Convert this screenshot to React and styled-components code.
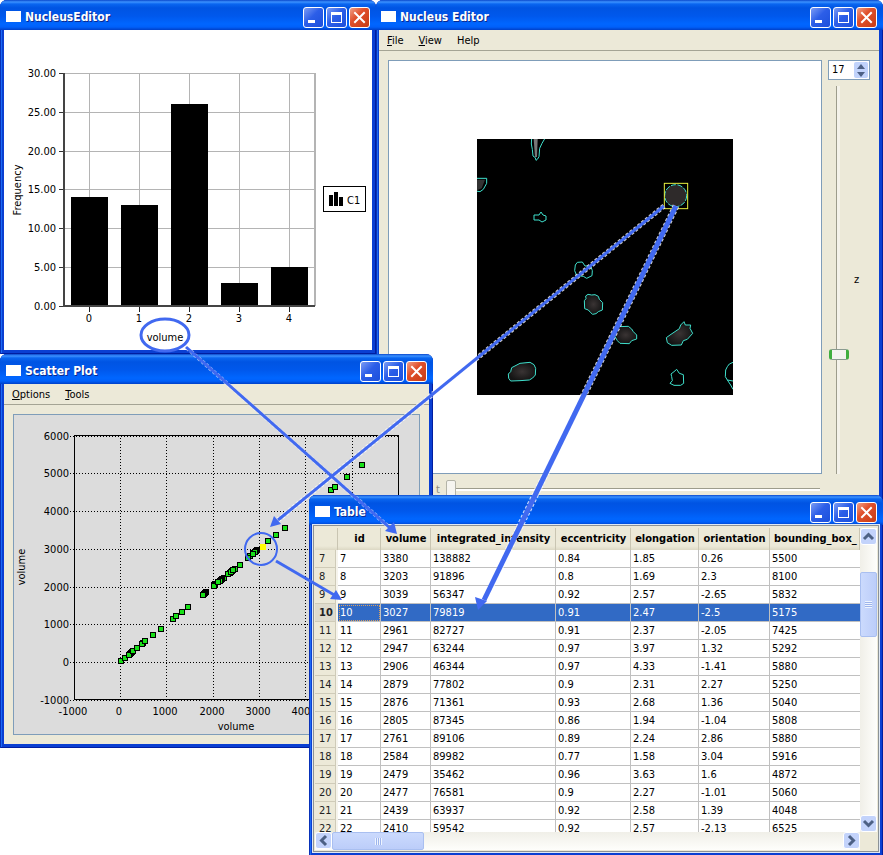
import React from "react";
import styled, { createGlobalStyle, css } from "styled-components";

const bars = [14, 13, 26, 3, 5];
const barTicks = [0, 5, 10, 15, 20, 25, 30];

const volumes = [
  30, 100, 230, 260, 240, 210, 190, 280, 360, 500, 480, 550, 710, 880, 1140, 1220,
  1330, 1460, 1850, 1830, 1810, 1790, 2060, 2040, 2020, 2200, 2240, 2210, 2180, 2150,
  2110, 2370, 2330, 2410, 2439, 2479, 2477, 2400, 2430, 2584, 2805, 2761, 2961, 2947,
  2879, 2906, 2876, 3203, 3380, 3560, 4550, 4640, 4900, 5220,
];

const columns = [
  { name: "id", width: 43 },
  { name: "volume", width: 50 },
  { name: "integrated_intensity", width: 125 },
  { name: "eccentricity", width: 75 },
  { name: "elongation", width: 68 },
  { name: "orientation", width: 71 },
  { name: "bounding_box_" },
];

const rows = [
  [7, 3380, 138882, 0.84, 1.85, 0.26, 5500],
  [8, 3203, 91896, 0.8, 1.69, 2.3, 8100],
  [9, 3039, 56347, 0.92, 2.57, -2.65, 5832],
  [10, 3027, 79819, 0.91, 2.47, -2.5, 5175],
  [11, 2961, 82727, 0.91, 2.37, -2.05, 7425],
  [12, 2947, 63244, 0.97, 3.97, 1.32, 5292],
  [13, 2906, 46344, 0.97, 4.33, -1.41, 5880],
  [14, 2879, 77802, 0.9, 2.31, 2.27, 5250],
  [15, 2876, 71361, 0.93, 2.68, 1.36, 5040],
  [16, 2805, 87345, 0.86, 1.94, -1.04, 5808],
  [17, 2761, 89106, 0.89, 2.24, 2.86, 5880],
  [18, 2584, 89982, 0.77, 1.58, 3.04, 5916],
  [19, 2479, 35462, 0.96, 3.63, 1.6, 4872],
  [20, 2477, 76581, 0.9, 2.27, -1.01, 5060],
  [21, 2439, 63937, 0.92, 2.58, 1.39, 4048],
  [22, 2410, 59542, 0.92, 2.57, -2.13, 6525],
];

// cell outlines, three units to a pixel of the slice
const nuclei = [
  "301,370 316,369 324,381 341,381 346,395 345,410 329,418 319,412 299,410 293,395 295,378",
  "333,466 344,468 354,467 364,472 367,481 377,491 376,513 364,518 357,524 347,526 341,521 334,513 323,509 322,485 327,479 326,471",
  "426,563 454,562 464,570 469,578 479,588 479,600 464,605 457,614 429,613 421,605 413,591 417,573",
  "579,588 607,569 611,558 621,548 625,558 641,558 639,568 647,583 631,601 619,605 613,618 584,619 571,611 568,596",
  "104,686 129,673 159,670 171,677 176,688 175,708 167,717 157,723 129,725 101,726 95,718 94,705 101,698",
  "591,698 599,691 607,703 619,707 620,733 611,739 591,739 579,733 586,725 584,713 582,705",
  "-4,118 29,118 29,133 19,151 9,158 -4,156",
  "164,-4 163,15 166,31 168,51 175,56 177,64 181,61 186,53 188,28 195,13 205,-4",
  "171,228 186,228 192,219 198,228 207,231 207,243 195,249 186,243 171,243",
];

const WindowButtons = () => (
  <Controls>
    <ControlButton aria-label="Minimize">
      <svg width="19" height="19">
        <rect x="4" y="12" width="7" height="3" fill="#fff" />
      </svg>
    </ControlButton>
    <ControlButton aria-label="Maximize">
      <svg width="19" height="19">
        <path d="M4 4h11v11H4z M5 7v7h9V7z" fill="#fff" fillRule="evenodd" />
      </svg>
    </ControlButton>
    <ControlButton $close aria-label="Close">
      <svg width="19" height="19">
        <path d="M5 5l9 9M14 5l-9 9" stroke="#fff" strokeWidth="2" strokeLinecap="square" />
      </svg>
    </ControlButton>
  </Controls>
);

const TitleBar = ({ title }) => (
  <TitleRow>
    <AppIcon />
    <Title>{title}</Title>
    <WindowButtons />
  </TitleRow>
);

const Histogram = () => {
  const y = (v) => 276 - Math.round(v * 7.77);
  const x = (i) => 85 + Math.round(i * 50.1);
  return (
    <Plot width="368" height="320" viewBox="0 0 368 320">
      {barTicks.map((t) => (
        <g key={t}>
          <path d={`M60 ${y(t) + 0.5}H311`} stroke="#b4b4b4" />
          <path d={`M55 ${y(t) + 0.5}h5`} stroke="#333" />
          <text x="52" y={y(t) + 4} textAnchor="end">
            {t.toFixed(2)}
          </text>
        </g>
      ))}
      {bars.map((v, i) => (
        <g key={i}>
          <path d={`M${x(i) + 0.5} 43V276`} stroke="#b4b4b4" />
          <rect x={x(i) - 18} y={y(v)} width="37" height={276 - y(v)} />
          <path d={`M${x(i) + 0.5} 277v5`} stroke="#222" />
          <text x={x(i)} y="292" textAnchor="middle">
            {i}
          </text>
        </g>
      ))}
      <path d="M311 43V276" stroke="#b4b4b4" strokeWidth="2" />
      <path d="M60 43V277M60 276H311" stroke="#444" strokeWidth="2" />
      <text x="161" y="311" textAnchor="middle">
        volume
      </text>
      <text transform="translate(17 160) rotate(-90)" textAnchor="middle">
        Frequency
      </text>
      <rect x="319.5" y="156.5" width="42" height="25" fill="#fff" stroke="#000" />
      <path d="M325 165h4v11h-4zM330 162h4v14h-4zM335 167h4v9h-4z" />
      <text x="343" y="174">
        C1
      </text>
    </Plot>
  );
};

const ScatterChart = () => {
  const x = (v) => 106 + Math.round(v * 0.0463);
  const y = (v) => 247 - Math.round(v * 0.0377);
  const ticks = [-1000, 0, 1000, 2000, 3000, 4000, 5000, 6000];
  return (
    <Plot $gray width="405" height="319" viewBox="0 0 405 319">
      {ticks.map((t) => (
        <g key={t}>
          {t > -1000 && t < 6000 && (
            <path d={`M${x(t) + 0.5} 20V286`} stroke="#000" strokeDasharray="1 2" />
          )}
          <path d={`M56 ${y(t) + 0.5}H384`} stroke="#000" strokeDasharray="1 2" />
          <text x="55" y={y(t) + 4} textAnchor="end">
            {t}
          </text>
          {t <= 4000 && (
            <text x={x(t) - 1} y="300" textAnchor="middle">
              {t}
            </text>
          )}
        </g>
      ))}
      <rect x="60.5" y="20.5" width="324" height="264" fill="none" stroke="#000" />
      {volumes.map((v, i) => (
        <rect
          key={i}
          x={x(v) - 2.5}
          y={y(v) - 2.5}
          width="5"
          height="5"
          fill="#18e018"
          stroke="#000"
        />
      ))}
      <rect x={x(3050) - 1} y={y(3050) - 3} width="6" height="6" fill="#ff0" />
      <text x="222" y="315" textAnchor="middle">
        volume
      </text>
      <text transform="translate(11 152) rotate(-90)" textAnchor="middle">
        volume
      </text>
    </Plot>
  );
};

const Slice = () => (
  <SliceImage width="256" height="256" viewBox="0 0 768 768">
    <defs>
      <radialGradient id="cell">
        <stop offset="0" stopColor="#3a3434" />
        <stop offset="1" stopColor="#141414" />
      </radialGradient>
    </defs>
    <path d="M170 0h12l-2 54h-6z" fill="#777" />
    <path d="M0 122h24l-10 26l-14 6z" fill="#333" />
    {nuclei.map((points, i) => (
      <polygon
        key={i}
        points={points}
        fill={i > 0 && i < 5 ? "url(#cell)" : "none"}
        stroke="#3fe0cc"
        strokeWidth="3"
      />
    ))}
    <path
      d="M768 670L757 675L751 683L746 693L745 713L751 723L768 726M751 723L761 738L768 751"
      fill="none"
      stroke="#3fe0cc"
      strokeWidth="3"
    />
    <circle cx="596" cy="170" r="33" fill="#2e2a2a" stroke="#3fe0cc" strokeWidth="3" strokeDasharray="16 4" />
    <rect x="562" y="133" width="70" height="76" fill="none" stroke="#e8f040" strokeWidth="3" />
  </SliceImage>
);

const Chevron = ({ d }) => (
  <svg width="15" height="15" viewBox="0 0 15 15">
    <path d={d} fill="none" stroke="#4d6185" strokeWidth="3" />
  </svg>
);

const DataTable = () => (
  <Grid>
    <colgroup>
      <Col $width={23} />
      {columns.map((c) => (
        <Col key={c.name} $width={c.width} />
      ))}
    </colgroup>
    <thead>
      <tr>
        <HeadCell aria-label="Row" />
        {columns.map((c) => (
          <HeadCell key={c.name} scope="col">
            {c.name}
          </HeadCell>
        ))}
      </tr>
    </thead>
    <tbody>
      {rows.map((row) => (
        <Row key={row[0]} $selected={row[0] === 10}>
          <RowHead scope="row" $selected={row[0] === 10}>
            {row[0]}
          </RowHead>
          {row.map((value, i) => (
            <Cell key={i}>{value}</Cell>
          ))}
        </Row>
      ))}
    </tbody>
  </Grid>
);

// arrows that tie the linked views together
const Links = () => (
  <LinkLayer width="883" height="855" viewBox="0 0 883 855">
    <g fill="none" stroke="#fff" strokeDasharray="3 2">
      <path d="M187 348L390 528" strokeWidth="4" strokeOpacity="0.6" />
      <path d="M664 206L278 520" strokeWidth="5" strokeOpacity="0.8" />
      <path d="M676 206L484 600" strokeWidth="7" strokeOpacity="0.8" />
    </g>
    <g fill="none" stroke="#4169f0">
      <ellipse cx="165" cy="335" rx="24" ry="16" strokeWidth="3" />
      <circle cx="261" cy="549" r="16" strokeWidth="2" />
      <path d="M186 347L390 528" strokeWidth="3" />
      <path d="M664 206L278 520" strokeWidth="3" />
      <path d="M676 206L484 600" strokeWidth="5" />
      <path d="M276 561L336 596" strokeWidth="3" />
    </g>
    <g fill="#4169f0">
      <path d="M397 534l-12 -3l9 -9z" />
      <path d="M270 527l4 -11l7 8z" />
      <path d="M478 610l-3 -13l12 4z" />
      <path d="M342 600l-12 -1l6 -9z" />
    </g>
  </LinkLayer>
);

const App = () => {
  return (
    <Desktop>
      <GlobalStyle />

      <EditorWindow>
        <TitleBar title="Nucleus Editor" />
        <MenuBar>
          <MenuItem>
            <u>F</u>ile
          </MenuItem>
          <MenuItem>
            <u>V</u>iew
          </MenuItem>
          <MenuItem>Help</MenuItem>
        </MenuBar>
        <EditorBody>
          <Canvas>
            <Slice />
          </Canvas>
          <SideColumn>
            <SpinBox>
              <SpinInput aria-label="z slice" defaultValue="17" />
              <SpinArrows>
                <SpinButton aria-label="Next slice">
                  <svg width="8" height="5">
                    <path d="M0 5L4 0L8 5z" fill="#4d6185" />
                  </svg>
                </SpinButton>
                <SpinButton aria-label="Previous slice">
                  <svg width="8" height="5">
                    <path d="M0 0L4 5L8 0z" fill="#4d6185" />
                  </svg>
                </SpinButton>
              </SpinArrows>
            </SpinBox>
            <DepthControl>
              <DepthSlider id="z" type="range" min="0" max="56" defaultValue="17" />
              <label htmlFor="z">z</label>
            </DepthControl>
          </SideColumn>
          <TimeControl>
            <label htmlFor="t">t</label>
            <TimeSlider id="t" type="range" min="0" max="10" defaultValue="0" />
          </TimeControl>
        </EditorBody>
      </EditorWindow>

      <HistogramWindow>
        <TitleBar title="NucleusEditor" />
        <Histogram />
      </HistogramWindow>

      <ScatterWindow>
        <TitleBar title="Scatter Plot" />
        <MenuBar>
          <MenuItem>
            <u>O</u>ptions
          </MenuItem>
          <MenuItem>
            <u>T</u>ools
          </MenuItem>
        </MenuBar>
        <ScatterBody>
          <ScatterFrame>
            <ScatterChart />
          </ScatterFrame>
        </ScatterBody>
      </ScatterWindow>

      <TableWindow>
        <TitleBar title="Table" />
        <TableFrame>
          <Viewport>
            <DataTable />
          </Viewport>
          <ScrollTrack $vertical>
            <ScrollButton aria-label="Scroll up">
              <Chevron d="M3 10L7.500 5.500L12 10" />
            </ScrollButton>
            <ScrollGap $size={27} />
            <ScrollThumb $vertical $size={65}>
              <Grip $vertical />
            </ScrollThumb>
            <ScrollGap />
            <ScrollButton aria-label="Scroll down">
              <Chevron d="M3 5L7.500 9.500L12 5" />
            </ScrollButton>
          </ScrollTrack>
          <ScrollTrack>
            <ScrollButton aria-label="Scroll left">
              <Chevron d="M10 3L5.500 7.500L10 12" />
            </ScrollButton>
            <ScrollThumb $size={92}>
              <Grip />
            </ScrollThumb>
            <ScrollGap />
            <ScrollButton aria-label="Scroll right">
              <Chevron d="M5 3L9.500 7.500L5 12" />
            </ScrollButton>
          </ScrollTrack>
        </TableFrame>
      </TableWindow>

      <Links />
    </Desktop>
  );
};

export default App;

const GlobalStyle = createGlobalStyle`
  * {
    box-sizing: border-box;
  }

  body {
    margin: 0;
    background: #fff;
    color: #000;
    font: 11px/14px "DejaVu Sans Condensed", "DejaVu Sans", sans-serif;
  }

  button, input {
    font: inherit;
    color: inherit;
  }
`;

const Desktop = styled.main`
  position: relative;
  min-height: max(100vh, 855px);
  overflow: hidden;
`;

const Window = styled.section`
  position: absolute;
  display: flex;
  flex-direction: column;
  overflow: hidden;
  border-radius: 7px 7px 0 0;
  padding: 0 4px 4px;
  background: #0a3fd2;
  box-shadow: inset 1px 0 #0831b8, inset -1px -1px #001ea0, inset 2px 0 #1c6af4;
`;

const HistogramWindow = styled(Window)`
  top: 0;
  left: 0;
  width: 376px;
`;

const EditorWindow = styled(Window)`
  top: 0;
  left: 376px;
  right: 0;
  padding-left: 3px;
`;

const ScatterWindow = styled(Window)`
  top: 354px;
  left: 0;
  width: 433px;
`;

const TableWindow = styled(Window)`
  top: 495px;
  left: 309px;
  right: 0;
`;

const TitleRow = styled.header`
  display: flex;
  align-items: center;
  height: 30px;
  margin: 0 -4px;
  padding: 4px 6px 0;
  background: linear-gradient(
    #0a48cc 0,
    #3c92ff 2px,
    #0a66f0 4px,
    #0054e3 8px,
    #0058ec 16px,
    #0066ff 24px,
    #0060fa 27px,
    #0040c8 30px
  );
`;

const AppIcon = styled.span`
  width: 15px;
  height: 11px;
  margin: 0 4px 2px 0;
  background: #fff;
`;

const Title = styled.h1`
  flex: 1;
  margin: 0;
  color: #fff;
  font-size: 12px;
  line-height: 16px;
  font-weight: 700;
  text-shadow: 1px 1px #0a2a90;
`;

const Controls = styled.div`
  display: flex;
  gap: 2px;
`;

const ControlButton = styled.button`
  width: 21px;
  height: 21px;
  padding: 0;
  border: 1px solid #fff;
  border-radius: 3px;
  background: ${({ $close }) =>
    $close
      ? "linear-gradient(135deg, #f0a088, #e0502c 40%, #c83c14)"
      : "linear-gradient(135deg, #7c9cf4, #2c5ee8 45%, #1c50dc)"};

  svg {
    display: block;
  }
`;

const MenuBar = styled.nav`
  display: flex;
  gap: 15px;
  height: 21px;
  padding: 1px 8px 0;
  background: #ece9d8;
  border-bottom: 1px solid #a5a495;
`;

const MenuItem = styled.button`
  padding: 0;
  border: 0;
  background: none;
`;

const Plot = styled.svg`
  display: block;
  background: ${({ $gray }) => ($gray ? "#dcdcdc" : "#fff")};
  font-size: 11px;
`;

const EditorBody = styled.div`
  display: grid;
  grid-template-columns: minmax(0, 1fr) 42px;
  grid-template-rows: 414px auto;
  gap: 6px;
  padding: 9px 9px 12px;
  background: #ece9d8;
`;

const Canvas = styled.div`
  display: flex;
  align-items: center;
  justify-content: center;
  border: 1px solid #7f9db9;
  background: #fff;
`;

const SliceImage = styled.svg`
  background: #000;
`;

const SideColumn = styled.div`
  display: flex;
  flex-direction: column;
  gap: 6px;
  min-height: 0;
`;

const SpinBox = styled.div`
  display: flex;
  height: 20px;
  padding: 1px;
  border: 1px solid #7f9db9;
  background: #fff;
`;

const SpinInput = styled.input`
  flex: 1;
  min-width: 0;
  padding: 0 2px;
  border: 0;
  outline: 0;
  background: none;
`;

const SpinArrows = styled.div`
  display: flex;
  flex-direction: column;
  width: 14px;
  border-radius: 2px;
  background: #c1d3fb;
`;

const SpinButton = styled.button`
  display: flex;
  flex: 1;
  align-items: center;
  justify-content: center;
  padding: 0;
  border: 0;
  background: none;
`;

const DepthControl = styled.div`
  display: flex;
  flex: 1;
  align-items: center;
  gap: 4px;
  min-height: 0;
`;

const slider = css`
  appearance: none;
  margin: 0;
`;

const DepthSlider = styled.input`
  ${slider}
  writing-mode: vertical-lr;
  direction: rtl;
  width: 22px;
  height: 100%;
  background: linear-gradient(90deg, transparent 8px, #9d9c8c 8px 9px, #f4f2ea 9px 12px, transparent 12px);

  &::-webkit-slider-thumb {
    appearance: none;
    width: 20px;
    height: 11px;
    border: 1px solid #778892;
    border-width: 1px 3px;
    border-color: #8a9a90 #3fae3f;
    border-radius: 3px;
    background: #f3f3ef;
  }
`;

const TimeControl = styled.div`
  display: flex;
  grid-column: 1 / -1;
  align-items: center;
  gap: 6px;
  padding: 0 50px 0 48px;
  color: #8a897c;
`;

const TimeSlider = styled.input`
  ${slider}
  flex: 1;
  min-width: 0;
  height: 20px;
  background: linear-gradient(transparent 8px, #9d9c8c 8px 9px, #fff 9px 11px, transparent 11px);

  &::-webkit-slider-thumb {
    appearance: none;
    width: 10px;
    height: 20px;
    border: 1px solid #b4b4a8;
    border-radius: 2px;
    background: #f6f5f0;
  }
`;

const ScatterBody = styled.div`
  padding: 9px;
  background: #ece9d8;
`;

const ScatterFrame = styled.div`
  border: 1px solid #7f9db9;
  background: #dcdcdc;
`;

const TableFrame = styled.div`
  display: grid;
  grid-template-columns: minmax(0, 1fr) 17px;
  grid-template-rows: 304px 18px;
  padding: 2px 1px 1px;
  border: 1px solid #8c9296;
  outline: 1px solid #dfe8f4;
  background: #ece9d8;
`;

const Viewport = styled.div`
  overflow: hidden;
  background: #fff;
`;

const Grid = styled.table`
  width: 100%;
  table-layout: fixed;
  border-collapse: separate;
  border-spacing: 0;
`;

const Col = styled.col`
  width: ${({ $width }) => ($width ? `${$width}px` : "auto")};
`;

const HeadCell = styled.th`
  height: 22px;
  padding: 0;
  overflow: hidden;
  background: linear-gradient(#ece9d8 18px, #dcd8c4 22px);
  box-shadow: inset -1px 0 #c9c5b2;
  font-weight: 700;
  line-height: 18px;
  text-align: center;
  white-space: nowrap;

  &:last-child {
    padding-left: 4px;
    text-align: left;
  }
`;

const Cell = styled.td`
  height: 18px;
  padding: 0 2px;
  border-right: 1px solid #c0c0c0;
  border-bottom: 1px solid #c0c0c0;
  line-height: 17px;

  &:last-child {
    border-right: 0;
  }
`;

const RowHead = styled.th`
  height: 18px;
  padding: 0 0 0 4px;
  background: ${({ $selected }) => ($selected ? "#dedbcd" : "#ece9d8")};
  box-shadow: inset -2px 0 #f6f4ec, inset -3px -1px #cfcbb8;
  color: #222;
  font-weight: ${({ $selected }) => ($selected ? 700 : 400)};
  line-height: 18px;
  text-align: left;
`;

const Row = styled.tr`
  ${({ $selected }) =>
    $selected &&
    css`
      ${Cell} {
        background: #316ac5;
        color: #fff;
      }

      td:nth-child(2) {
        outline: 1px dotted #d8a060;
        outline-offset: -2px;
      }
    `}
`;

const ScrollTrack = styled.div`
  display: flex;
  flex-direction: ${({ $vertical }) => ($vertical ? "column" : "row")};
  background: ${({ $vertical }) =>
    $vertical
      ? "linear-gradient(90deg, #f0efe8, #fefefb)"
      : "linear-gradient(#f0efe8, #fefefb)"};
`;

const ScrollButton = styled.button`
  display: flex;
  flex: none;
  align-items: center;
  justify-content: center;
  width: 17px;
  height: 17px;
  padding: 0;
  border: 1px solid #fff;
  border-radius: 3px;
  background: #c3d3fb;
`;

const ScrollGap = styled.div`
  flex: ${({ $size }) => ($size ? `0 0 ${$size}px` : 1)};
`;

const ScrollThumb = styled.div`
  display: flex;
  flex: 0 0 ${({ $size }) => $size}px;
  align-items: center;
  justify-content: center;
  border: 1px solid #a9bff0;
  border-radius: 2px;
  background: linear-gradient(
    ${({ $vertical }) => ($vertical ? "90deg" : "180deg")},
    #cbdafd,
    #bccdf9
  );
`;

const Grip = styled.span`
  width: 7px;
  height: 7px;
  background: repeating-linear-gradient(
    ${({ $vertical }) => ($vertical ? "180deg" : "90deg")},
    #eef4fe 0 1px,
    #9db4ec 1px 2px
  );
`;

const LinkLayer = styled.svg`
  position: absolute;
  top: 0;
  left: 0;
  pointer-events: none;
`;
